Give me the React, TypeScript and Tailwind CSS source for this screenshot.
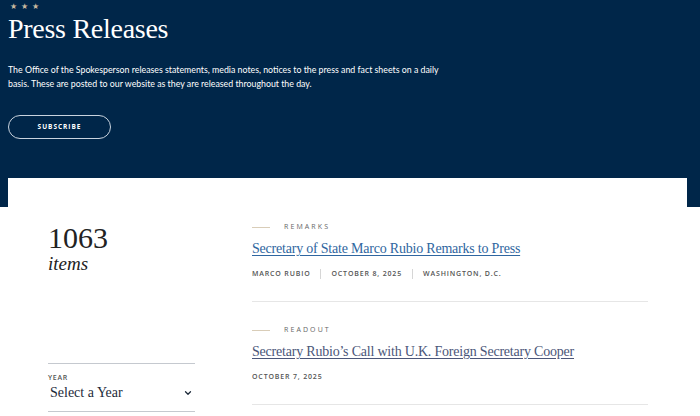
import React from "react";
import { ChevronDown } from "lucide-react";

const serif = "font-['Liberation_Serif',serif]";
const sans = "font-['Open_Sans',sans-serif]";

type Release = {
  kind: string;
  title: string;
  meta: string[];
  visited?: boolean;
};

const releases: Release[] = [
  {
    kind: "Remarks",
    title: "Secretary of State Marco Rubio Remarks to Press",
    meta: ["Marco Rubio", "October 8, 2025", "Washington, D.C."],
  },
  {
    kind: "Readout",
    title: "Secretary Rubio’s Call with U.K. Foreign Secretary Cooper",
    meta: ["October 7, 2025"],
    visited: true,
  },
];

function Stars() {
  return (
    <div className="flex gap-[4px] pl-[10px] pt-[2px] text-[#c8b89f] text-[8px] leading-none">
      <span>★</span>
      <span>★</span>
      <span>★</span>
    </div>
  );
}

function ReleaseItem({ item }: { item: Release }) {
  return (
    <div className="border-b border-[#e6e6e6] pt-[23px] pb-[22px]">
      <div className="flex items-center gap-[14px] h-[10px]">
        <span className="w-[18px] h-px bg-[#d9cdb8]" />
        <span className={`${sans} text-[7px] leading-[10px] tracking-[0.3em] uppercase text-[#666]`}>{item.kind}</span>
      </div>
      <a
        href="#"
        className={`${serif} block mt-[7px] text-[14px] leading-[20px] underline underline-offset-2 tracking-[-0.015em] ${
          item.visited ? "text-[#4b5679]" : "text-[#2f66a0]"
        }`}
      >
        {item.title}
      </a>
      <div
        className={`${sans} flex items-center mt-[10px] h-[10px] text-[7px] leading-[10px] font-semibold tracking-[0.12em] uppercase text-[#555]`}
      >
        {item.meta.map((m, i) => (
          <React.Fragment key={m}>
            {i > 0 && <span className="mx-[10px] w-px h-[10px] bg-[#d6d6d6]" />}
            <span>{m}</span>
          </React.Fragment>
        ))}
      </div>
    </div>
  );
}

export default function App() {
  return (
    <div className="w-[700px] h-[416px] overflow-hidden bg-white">
      {/* hero */}
      <section className="bg-[#002649] text-white h-[207px]">
        <Stars />
        <h1 className={`${serif} pl-[8px] mt-[3px] text-[28px] leading-[32px] tracking-[-0.01em]`}>Press Releases</h1>
        <p className="font-['Lato',sans-serif] pl-[8px] mt-[18px] text-[8.8px] leading-[14px] w-[452px]">
          The Office of the Spokesperson releases statements, media notes, notices to the press and fact sheets on a daily
          basis. These are posted to our website as they are released throughout the day.
        </p>
        <div className="pl-[8px] mt-[20px]">
          <button
            className={`${sans} w-[103px] h-[24px] rounded-full border border-[#c9d3de] text-[6.5px] font-bold tracking-[0.15em]`}
          >
            SUBSCRIBE
          </button>
        </div>
      </section>

      {/* content card */}
      <main className="relative -mt-[29px] ml-[8px] w-[679px] bg-white flex">
        <aside className="w-[147px] ml-[40px] shrink-0">
          <div className={`${serif} mt-[45px] text-[30px] leading-[30px] text-[#222]`}>1063</div>
          <div className={`${serif} italic text-[19px] leading-[22px] text-[#222]`}>items</div>
          <div className="mt-[88px] border-t border-[#c5c9cf] pt-[9px] pb-[8px] border-b">
            <div className={`${sans} text-[7px] leading-[10px] font-semibold tracking-[0.1em] text-[#555]`}>YEAR</div>
            <div className="flex items-center justify-between pl-[2px] pr-[2px]">
              <span className={`${serif} text-[14px] leading-[20px] text-[#1d2a3a]`}>Select a Year</span>
              <ChevronDown size={10} strokeWidth={3} className="text-[#1d2a3a]" />
            </div>
          </div>
        </aside>
        <div className="ml-[57px] w-[396px] mt-[21px]">
          {releases.map((r) => (
            <ReleaseItem key={r.title} item={r} />
          ))}
        </div>
      </main>
    </div>
  );
}
